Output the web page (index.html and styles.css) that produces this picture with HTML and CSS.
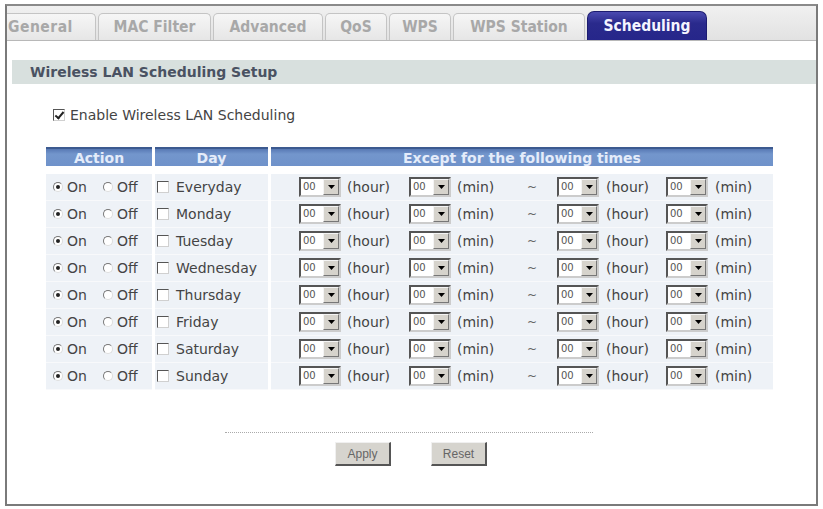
FILE: index.html
```html
<!DOCTYPE html>
<html>
<head>
<meta charset="utf-8">
<link rel="stylesheet" href="styles.css">
</head>
<body>
<div class="frame">
  <div class="tabbar">
    <div class="tab t1">General</div>
    <div class="tab t2">MAC Filter</div>
    <div class="tab t3">Advanced</div>
    <div class="tab t4">QoS</div>
    <div class="tab t5">WPS</div>
    <div class="tab t6">WPS Station</div>
    <div class="tab active">Scheduling</div>
  </div>
  <div class="section">Wireless LAN Scheduling Setup</div>
  <div class="enable"><span class="cb checked"></span><span>Enable Wireless LAN Scheduling</span></div>
  <table class="sched">
    <thead>
      <tr><th class="c-act">Action</th><th class="c-day">Day</th><th class="c-exc">Except for the following times</th></tr>
    </thead>
    <tbody id="rows"></tbody>
  </table>
  <div class="rule"></div>
  <div class="buttons"><span class="btn">Apply</span><span class="btn">Reset</span></div>
</div>
<script src="app.js"></script>
</body>
</html>
```
FILE: app.js
```js
var days = ["Everyday","Monday","Tuesday","Wednesday","Thursday","Friday","Saturday","Sunday"];
var sel = function(v){ return '<span class="sel"><span class="val">' + v + '</span><span class="arr"><svg width="7" height="4" viewBox="0 0 7 4"><path d="M0 0H7L3.5 4Z" fill="#000"/></svg></span></span>'; };
var html = "";
days.forEach(function(d){
  html += '<tr>' +
    '<td class="c-act"><div class="act"><span class="rd on"></span><span class="lbl-on">On</span><span class="rd"></span><span>Off</span></div></td>' +
    '<td class="c-day"><div class="day"><span class="cb"></span><span>' + d + '</span></div></td>' +
    '<td class="c-exc"><div class="exc">' + sel("00") + '<span class="u1">(hour)</span>' + sel("00") + '<span class="u2">(min)</span><span class="tl">~</span>' + sel("00") + '<span class="u3">(hour)</span>' + sel("00") + '<span class="u4">(min)</span></div></td>' +
    '</tr>';
});
document.getElementById("rows").innerHTML = html;
```
FILE: styles.css
```css
* { box-sizing: border-box; }
html, body { margin: 0; padding: 0; background: #fff; }
body { font-family: "DejaVu Sans", Verdana, sans-serif; font-size: 14px; color: #333; }

.frame {
  margin: 4px 0 0 5px;
  width: 813px;
  height: 502px;
  border: 2px solid #7a7a7a;
  border-top-color: #8a8a8a;
  background: #fff;
}

.tabbar {
  height: 35px;
  background: linear-gradient(#f0f0f0, #e2e2e2);
  border-bottom: 1px solid #b8b8b8;
  display: flex;
  align-items: flex-end;
  gap: 2px;
}
.tab {
  height: 27px;
  border: 1px solid #c4c4c4;
  border-bottom: none;
  border-radius: 5px 5px 0 0;
  background: linear-gradient(#f6f6f6, #e6e6e6);
  color: #a8a8a8;
  font-family: "DejaVu Sans Condensed", "DejaVu Sans", sans-serif;
  font-weight: bold;
  font-size: 15.5px;
  display: flex;
  align-items: center;
  justify-content: center;
}
.t1 { width: 89px; border-left: none; border-radius: 0 5px 0 0; justify-content: flex-start; padding-left: 1px; letter-spacing: 0.5px; }
.t2 { width: 113px; }
.t3 { width: 110px; }
.t4 { width: 62px; }
.t5 { width: 62px; }
.t6 { width: 132px; }
.tab.active {
  width: 120px;
  height: 29px;
  background: linear-gradient(#4a4ab0, #2a2a8c 40%, #26268a);
  border: 1px solid #1c1c70;
  border-bottom: none;
  border-radius: 7px 7px 0 0;
  color: #f4f4ff;
}

.section {
  margin: 19px 0 0 5px;
  width: 804px;
  height: 24px;
  background: #d8e0de;
  color: #4a5262;
  font-weight: bold;
  font-size: 14px;
  padding-left: 18px;
  display: flex;
  align-items: center;
}

.enable {
  margin: 21px 0 0 46px;
  display: flex;
  align-items: center;
  gap: 5px;
  font-size: 14px;
  color: #444;
  height: 20px;
}

.cb {
  display: inline-block;
  width: 12px;
  height: 12px;
  border: 1px solid #555;
  border-right-color: #d0d0d0;
  border-bottom-color: #d0d0d0;
  background: #fff;
  position: relative;
  flex: none;
}
.cb.checked::after {
  content: "";
  position: absolute;
  left: 3px;
  top: 0px;
  width: 3px;
  height: 7px;
  border: solid #222;
  border-width: 0 2px 2px 0;
  transform: rotate(40deg);
}

.sched {
  margin: 22px 0 0 36px;
  border-collapse: separate;
  border-spacing: 3px 0;
  width: 733px;
}
.sched th {
  height: 19px;
  padding: 0;
  background: linear-gradient(#5879b4, #7396cc 30%, #6f92ca);
  border-top: 2px solid #3c5a90;
  color: #e4ecfa;
  font-weight: bold;
  font-size: 14px;
  text-align: center;
}
.sched th.c-act { width: 106px; }
.sched th.c-day { width: 113px; }
.sched td {
  padding: 0;
  height: 27px;
  background: #eef2f7;
  border-bottom: 1px solid #f8f9fb;
}
.sched tbody tr:first-child td { border-top: 8px solid #fff; height: 35px; }

.act, .day, .exc { display: flex; align-items: center; color: #444; }
.act { padding-left: 7px; }
.rd {
  display: inline-block;
  width: 10px;
  height: 10px;
  border-radius: 50%;
  border: 1px solid #777;
  border-right-color: #ddd;
  border-bottom-color: #ddd;
  background: #fff;
  position: relative;
  margin-right: 4px;
  flex: none;
}
.rd.on::after {
  content: "";
  position: absolute;
  left: 2px; top: 2px;
  width: 4px; height: 4px;
  border-radius: 50%;
  background: #222;
}
.lbl-on { width: 36px; }
.day { padding-left: 2px; gap: 7px; }

.exc { padding-left: 28px; }
.sel {
  display: inline-flex;
  align-items: stretch;
  width: 42px;
  height: 20px;
  border: 2px solid #555;
  border-right-color: #ccc;
  border-bottom-color: #ccc;
  background: #fff;
  flex: none;
}
.sel .val { flex: 1; font-size: 10px; color: #555; padding-left: 2px; line-height: 16px; }
.sel .arr {
  width: 16px;
  background: #d6d3cc;
  border: 1px solid #f4f4f4;
  border-right-color: #777;
  border-bottom-color: #777;
  display: flex;
  align-items: center;
  justify-content: center;
}
.u1 { width: 68px; padding-left: 6px; }
.u2 { width: 76px; padding-left: 6px; }
.tl { width: 30px; color: #666; font-size: 12px; }
.u3 { width: 67px; padding-left: 7px; }
.u4 { padding-left: 7px; }

.rule {
  margin: 42px 0 0 218px;
  width: 368px;
  border-top: 1px dotted #aaa;
}
.buttons {
  margin: 9px 0 0 328px;
  display: flex;
  gap: 40px;
}
.btn {
  width: 56px;
  height: 24px;
  background: #d6d4ce;
  border: 1px solid #f0f0f0;
  border-right: 2px solid #555;
  border-bottom: 2px solid #555;
  color: #666;
  font-family: "Liberation Sans", Arial, sans-serif;
  font-size: 12px;
  display: flex;
  align-items: center;
  justify-content: center;
}
```
